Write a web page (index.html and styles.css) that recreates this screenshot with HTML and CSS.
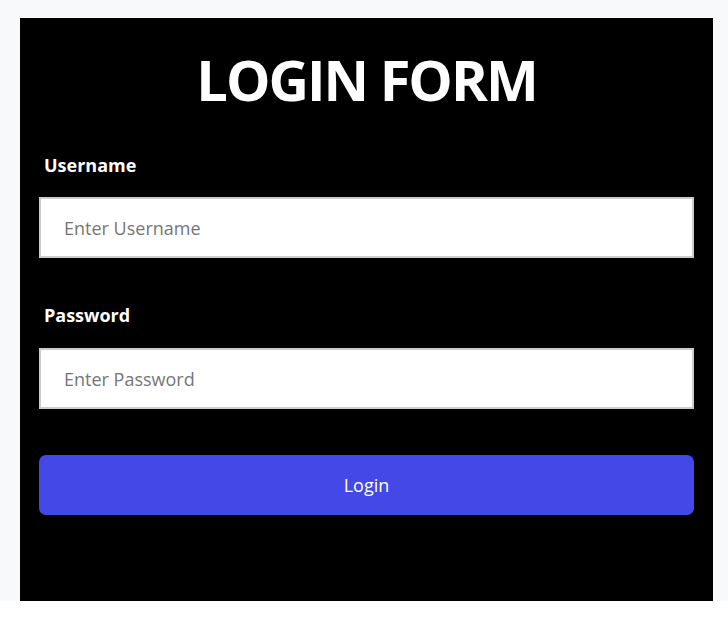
FILE: index.html
```html
<!DOCTYPE html>
<html lang="en">
<head>
<meta charset="utf-8">
<title>Login Form</title>
<link rel="stylesheet" href="styles.css">
</head>
<body>
<div class="page">
  <form class="card">
    <h1 class="title">LOGIN FORM</h1>
    <label class="label" for="user">Username</label>
    <input class="field" id="user" type="text" placeholder="Enter Username">
    <label class="label label-second" for="pass">Password</label>
    <input class="field" id="pass" type="password" placeholder="Enter Password">
    <button class="btn" type="button">Login</button>
  </form>
</div>
</body>
</html>
```
FILE: styles.css
```css
html, body {
  margin: 0;
  padding: 0;
  background: #ffffff;
  font-family: "Open Sans", "Liberation Sans", sans-serif;
}
.page {
  background: #f8f9fb;
  padding: 18px 15px 0 20px;
}
.card {
  background: #000000;
  height: 583px;
  box-sizing: border-box;
  padding: 23px 19px 0 19px;
  display: flex;
  flex-direction: column;
}
.title {
  margin: 0;
  color: #ffffff;
  font-size: 56px;
  font-weight: 700;
  letter-spacing: -2px;
  text-align: center;
  line-height: 76px;
}
.label {
  color: #ffffff;
  font-size: 18px;
  font-weight: 700;
  margin: 36px 0 20px 5px;
  line-height: 24px;
}
.label-second {
  margin-top: 45px;
  margin-bottom: 21px;
}
.field {
  height: 61px;
  box-sizing: border-box;
  border: 2px solid #cccccc;
  background: #ffffff;
  padding: 0 23px;
  font-family: inherit;
  font-size: 18px;
  color: #333;
  outline: none;
  margin: 0;
}
.field::placeholder {
  color: #767676;
}
.btn {
  margin-top: 46px;
  height: 60px;
  border: none;
  border-radius: 7px;
  background: #4348e6;
  color: #ffffff;
  font-family: inherit;
  font-size: 18px;
}
```
